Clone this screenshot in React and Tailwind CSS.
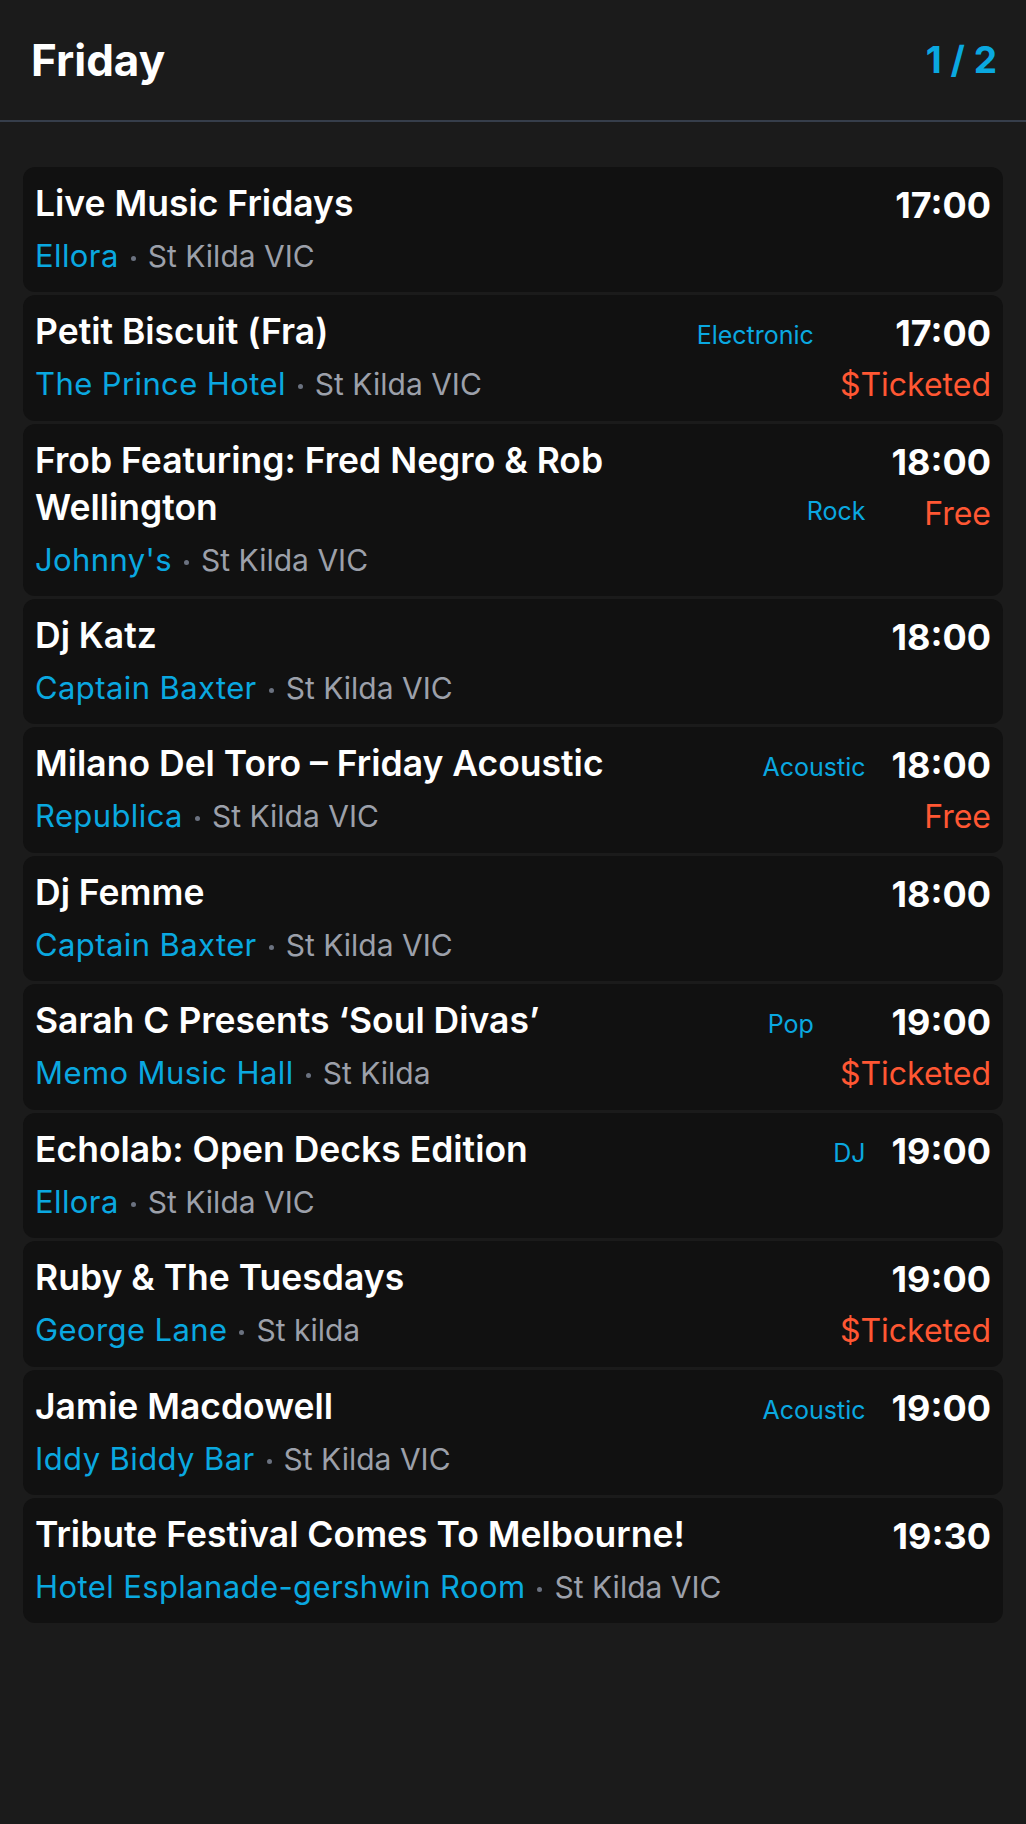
const events = [
  { title: 'Live Music Fridays', venue: 'Ellora', suburb: 'St Kilda VIC', time: '17:00' },
  { title: 'Petit Biscuit (Fra)', venue: 'The Prince Hotel', suburb: 'St Kilda VIC', genre: 'Electronic', time: '17:00', price: '$Ticketed' },
  { title: 'Frob Featuring: Fred Negro & Rob Wellington', venue: "Johnny's", suburb: 'St Kilda VIC', genre: 'Rock', time: '18:00', price: 'Free' },
  { title: 'Dj Katz', venue: 'Captain Baxter', suburb: 'St Kilda VIC', time: '18:00' },
  { title: 'Milano Del Toro – Friday Acoustic', venue: 'Republica', suburb: 'St Kilda VIC', genre: 'Acoustic', time: '18:00', price: 'Free' },
  { title: 'Dj Femme', venue: 'Captain Baxter', suburb: 'St Kilda VIC', time: '18:00' },
  { title: 'Sarah C Presents ‘Soul Divas’', venue: 'Memo Music Hall', suburb: 'St Kilda', genre: 'Pop', time: '19:00', price: '$Ticketed' },
  { title: 'Echolab: Open Decks Edition', venue: 'Ellora', suburb: 'St Kilda VIC', genre: 'DJ', time: '19:00' },
  { title: 'Ruby & The Tuesdays', venue: 'George Lane', suburb: 'St kilda', time: '19:00', price: '$Ticketed' },
  { title: 'Jamie Macdowell', venue: 'Iddy Biddy Bar', suburb: 'St Kilda VIC', genre: 'Acoustic', time: '19:00' },
  { title: 'Tribute Festival Comes To Melbourne!', venue: 'Hotel Esplanade-gershwin Room', suburb: 'St Kilda VIC', time: '19:30' },
];

function EventCard({ event }) {
  return (
    <div className="flex items-start gap-[26px] rounded-xl bg-[#111111] pl-3 pr-3 pt-[13px] pb-4">
      <div className="min-w-0 flex-1">
        <div className="flex gap-[26px] [align-items:last_baseline]">
          <div className="min-w-0 flex-1 text-[35.5px] font-semibold leading-[47px] text-white">
            {event.title}
          </div>
          {event.genre && (
            <span className="shrink-0 text-[25px] text-[#0aa8e0]">{event.genre}</span>
          )}
        </div>
        <div className="mt-[9px] text-[31px] leading-[40px]">
          <span className="tracking-[0.4px] text-[#0aa8e0]">{event.venue}</span>
          <span className="mx-[12px] inline-block h-[5px] w-[5px] rounded-full bg-[#6b7280] align-middle"></span>
          <span className="text-[30px] text-[#9ca0aa]">{event.suburb}</span>
        </div>
      </div>
      <div className="flex shrink-0 flex-col items-end pt-[2px]">
        <div className="text-[36px] font-bold leading-[47px] text-white">{event.time}</div>
        {event.price && (
          <div className="mt-2 text-[32px] leading-[40px] text-[#ff5733]">{event.price}</div>
        )}
      </div>
    </div>
  );
}

export default function App() {
  return (
    <div className="min-h-screen bg-[#1b1b1b] font-['Inter',sans-serif]">
      <div className="flex h-[122px] items-center justify-between border-b-2 border-[#363e4b] pl-[31px] pr-[29px]">
        <h1 className="text-[44px] font-bold text-white">Friday</h1>
        <span className="text-[37px] font-bold text-[#0aa8e0]">1 / 2</span>
      </div>

      <div className="flex flex-col gap-[3px] px-[23px] pt-[45px] pb-10">
        {events.map((event, i) => (
          <EventCard key={i} event={event} />
        ))}
      </div>
    </div>
  );
}
